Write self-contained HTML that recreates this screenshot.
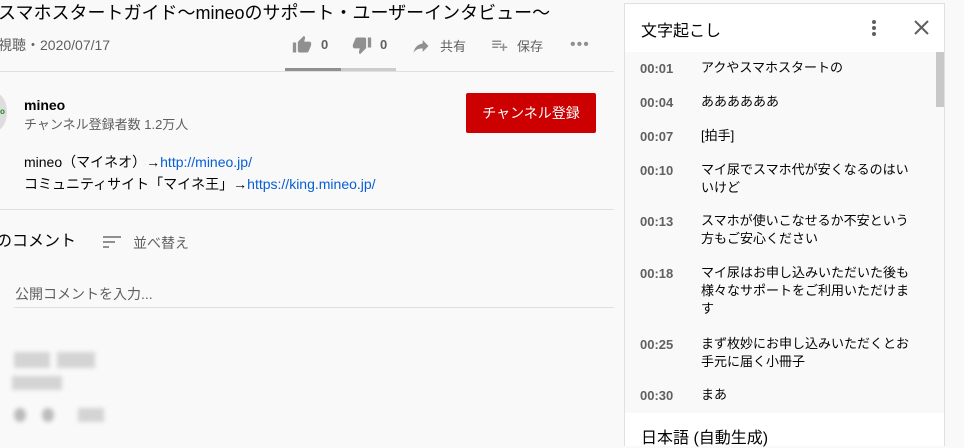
<!DOCTYPE html>
<html><head><meta charset="utf-8"><style>
*{margin:0;padding:0;box-sizing:border-box}
body{width:964px;height:446px;overflow:hidden;background:#f9f9f9;font-family:"Liberation Sans","Noto Sans CJK JP",sans-serif;color:#030303;position:relative}
.a{position:absolute;white-space:nowrap}
.g{color:#606060}
.l{color:#065fd4}
.ico{fill:#909090}
.t{position:absolute;left:640px;font-size:13px;color:#606060;font-weight:bold}
.x{position:absolute;left:701px;font-size:13px;line-height:18px;width:215px;color:#030303}
.blur{position:absolute;background:#d4d4d4;filter:blur(2px)}
</style></head><body>
<div class="a" style="left:-2px;top:-1px;font-size:18px">スマホスタートガイド～mineoのサポート・ユーザーインタビュー～</div>
<div class="a g" style="left:-2px;top:35px;font-size:14px">視聴・2020/07/17</div>
<svg class="a" style="left:292px;top:35px" width="20" height="20" viewBox="0 0 24 24"><path class="ico" d="M1 21h4V9H1v12zm22-11c0-1.1-.9-2-2-2h-6.3l1-4.6v-.3c0-.4-.2-.8-.4-1.1L14.2 1 7.6 7.6C7.2 7.9 7 8.4 7 9v10c0 1.1.9 2 2 2h9c.8 0 1.5-.5 1.8-1.200l3-7.1c.1-.2.2-.5.2-.7v-2z"/></svg>
<div class="a" style="left:321px;top:37px;font-size:13px;color:#606060;font-weight:bold">0</div>
<svg class="a" style="left:352px;top:35px" width="20" height="20" viewBox="0 0 24 24"><path class="ico" d="M15 3H6c-.8 0-1.5.5-1.8 1.2l-3 7.1c-.1.2-.2.5-.2.7v2c0 1.1.9 2 2 2h6.3l-1 4.6v.3c0 .4.2.8.4 1.1L9.8 23l6.6-6.6c.4-.4.6-.9.6-1.4V5c0-1.1-.9-2-2-2zm4 0v12h4V3h-4z"/></svg>
<div class="a" style="left:380px;top:37px;font-size:13px;color:#606060;font-weight:bold">0</div>
<svg class="a" style="left:411px;top:36px" width="20" height="20" viewBox="0 0 24 24"><path class="ico" d="M14 9V5l7 7-7 7v-4.1c-5 0-8.5 1.6-11 5.1 1-5 4-10 11-11z"/></svg>
<div class="a g" style="left:440px;top:36px;font-size:13px">共有</div>
<svg class="a" style="left:490px;top:36px" width="18" height="18" viewBox="0 0 24 24"><path class="ico" d="M3 6h12v2H3zm0 4h12v2H3zm0 4h8v2H3zm14 0v-4h2v4h4v2h-4v4h-2v-4h-4v-2z"/></svg>
<div class="a g" style="left:517px;top:36px;font-size:13px">保存</div>
<div class="a" style="left:570px;top:36px;font-size:16px;color:#909090;letter-spacing:1px">•••</div>
<div class="a" style="left:0;top:71px;width:614px;height:1px;background:#e0e0e0"></div>
<div class="a" style="left:285px;top:68px;width:56px;height:3px;background:#909090"></div>
<div class="a" style="left:341px;top:68px;width:55px;height:3px;background:#ccc"></div>
<div class="a" style="left:-20px;top:92px;width:27px;height:40px;border-radius:50%;background:#ddd"></div>
<div class="a" style="left:0;top:107px;font-size:8px;color:#1a8a1a;font-weight:bold">o</div>
<div class="a" style="left:24px;top:97px;font-size:14px;font-weight:bold">mineo</div>
<div class="a g" style="left:24px;top:114px;font-size:13px">チャンネル登録者数 1.2万人</div>
<div class="a" style="left:466px;top:93px;width:130px;height:40px;background:#cc0000;border-radius:2px;color:#fff;font-size:14px;text-align:center;line-height:40px">チャンネル登録</div>
<div class="a" style="left:24px;top:152px;font-size:14px">mineo（マイネオ）→<span class="l">http://mineo.jp/</span></div>
<div class="a" style="left:24px;top:174px;font-size:14px">コミュニティサイト「マイネ王」→<span class="l">https://king.mineo.jp/</span></div>
<div class="a" style="left:0;top:209px;width:614px;height:1px;background:#e0e0e0"></div>
<div class="a" style="left:-4px;top:233px;font-size:16px;line-height:18px">のコメント</div>
<svg class="a" style="left:103px;top:234px" width="20" height="16" viewBox="0 0 20 16"><path fill="#909090" d="M0 2h18v2H0zm0 5h12v2H0zm0 5h6v2H0z"/></svg>
<div class="a g" style="left:133px;top:233px;font-size:14px">並べ替え</div>
<div class="a g" style="left:15px;top:284px;font-size:14px">公開コメントを入力...</div>
<div class="a" style="left:14px;top:307px;width:600px;height:1px;background:#e0e0e0"></div>
<div class="blur" style="left:14px;top:352px;width:36px;height:16px"></div>
<div class="blur" style="left:57px;top:352px;width:38px;height:16px"></div>
<div class="blur" style="left:12px;top:376px;width:50px;height:14px"></div>
<div class="blur" style="left:14px;top:408px;width:12px;height:14px;border-radius:50%;background:#bbb"></div>
<div class="blur" style="left:42px;top:408px;width:12px;height:14px;border-radius:50%;background:#bbb"></div>
<div class="blur" style="left:78px;top:408px;width:26px;height:14px"></div>

<div class="a" style="left:624px;top:3px;width:321px;height:443px;border:1px solid #e0e0e0;background:#f9f9f9"></div>
<div class="a" style="left:625px;top:4px;width:319px;height:48px;background:#fff"></div>
<div class="a" style="left:641px;top:17px;font-size:16px">文字起こし</div>
<div class="a" style="left:872px;top:20px;width:4px;height:4px;border-radius:50%;background:#606060;box-shadow:0 6px 0 #606060,0 12px 0 #606060"></div>
<svg class="a" style="left:913px;top:19px" width="17" height="17" viewBox="0 0 17 17"><path d="M2 2L15 15M15 2L2 15" stroke="#606060" stroke-width="2"/></svg>
<div class="a" style="left:936px;top:52px;width:8px;height:55px;background:#c8c8c8"></div>
<div class="t" style="top:61px">00:01</div><div class="x" style="top:59px">アクやスマホスタートの</div>
<div class="t" style="top:95px">00:04</div><div class="x" style="top:93px">ああああああ</div>
<div class="t" style="top:129px">00:07</div><div class="x" style="top:127px">[拍手]</div>
<div class="t" style="top:163px">00:10</div><div class="x" style="top:161px">マイ尿でスマホ代が安くなるのはい<br>いけど</div>
<div class="t" style="top:214px">00:13</div><div class="x" style="top:212px">スマホが使いこなせるか不安という<br>方もご安心ください</div>
<div class="t" style="top:266px">00:18</div><div class="x" style="top:264px">マイ尿はお申し込みいただいた後も<br>様々なサポートをご利用いただけま<br>す</div>
<div class="t" style="top:337px">00:25</div><div class="x" style="top:335px">まず枚妙にお申し込みいただくとお<br>手元に届く小冊子</div>
<div class="t" style="top:388px">00:30</div><div class="x" style="top:386px">まあ</div>
<div class="a" style="left:625px;top:413px;width:319px;height:33px;background:#fff"></div>
<div class="a" style="left:641px;top:424px;font-size:16px">日本語 (自動生成)</div>
</body></html>
